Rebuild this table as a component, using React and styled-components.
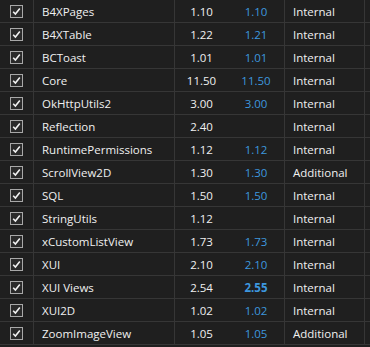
import React from "react";
import styled, { createGlobalStyle } from "styled-components";

const Global = createGlobalStyle`
  html, body { margin: 0; padding: 0; background: #1f1f1f; }
  body { font-family: "Open Sans", "Noto Sans", sans-serif; }
`;

const Table = styled.div`
  width: 370px;
  height: 347px;
  overflow: hidden;
  background: #1f1f1f;
`;

const Row = styled.div`
  display: grid;
  grid-template-columns: 34px 141px 53px 57px 80px 5px;
  height: 22px;
  border-bottom: 1px solid #363636;
`;

const Cell = styled.div`
  display: flex;
  align-items: center;
  justify-content: ${(p) => (p.$center ? "center" : "flex-start")};
  padding-left: ${(p) => (p.$center ? "0" : "8px")};
  border-right: ${(p) => (p.$noBorder ? "none" : "1px solid #363636")};
  color: ${(p) => (p.$blue ? "#3d97de" : "#f0f0f0")};
  font-weight: ${(p) => (p.$bold ? 700 : 400)};
  font-size: 11.5px;
  white-space: nowrap;
  overflow: hidden;
`;

const CheckCell = styled.div`
  display: flex;
  align-items: flex-start;
  padding: 5px 0 0 10px;
  border-right: 1px solid #363636;
`;

const Box = styled.div`
  width: 11px;
  height: 11px;
  border: 1px solid #a8a8a8;
  background: #2a2a2a;
  display: flex;
  align-items: center;
  justify-content: center;
`;

const Check = () => (
  <Box>
    <svg width="9" height="9" viewBox="0 0 9 9">
      <path d="M1.2 4.8 L3.4 7 L7.8 1.6" fill="none" stroke="#f2f2f2" strokeWidth="1.6" />
    </svg>
  </Box>
);

const data = [
  ["B4XPages", "1.10", "1.10", "Internal"],
  ["B4XTable", "1.22", "1.21", "Internal"],
  ["BCToast", "1.01", "1.01", "Internal"],
  ["Core", "11.50", "11.50", "Internal"],
  ["OkHttpUtils2", "3.00", "3.00", "Internal"],
  ["Reflection", "2.40", "", "Internal"],
  ["RuntimePermissions", "1.12", "1.12", "Internal"],
  ["ScrollView2D", "1.30", "1.30", "Additional"],
  ["SQL", "1.50", "1.50", "Internal"],
  ["StringUtils", "1.12", "", "Internal"],
  ["xCustomListView", "1.73", "1.73", "Internal"],
  ["XUI", "2.10", "2.10", "Internal"],
  ["XUI Views", "2.54", "2.55", "Internal", true],
  ["XUI2D", "1.02", "1.02", "Internal"],
  ["ZoomImageView", "1.05", "1.05", "Additional"],
];

export default function App() {
  return (
    <>
      <Global />
      <Table>
        {data.map(([name, v1, v2, path, bold]) => (
          <Row key={name}>
            <CheckCell>
              <Check />
            </CheckCell>
            <Cell>{name}</Cell>
            <Cell $center $noBorder>{v1}</Cell>
            <Cell $center $blue $bold={bold}>{v2}</Cell>
            <Cell>{path}</Cell>
            <Cell $noBorder />
          </Row>
        ))}
      </Table>
    </>
  );
}
